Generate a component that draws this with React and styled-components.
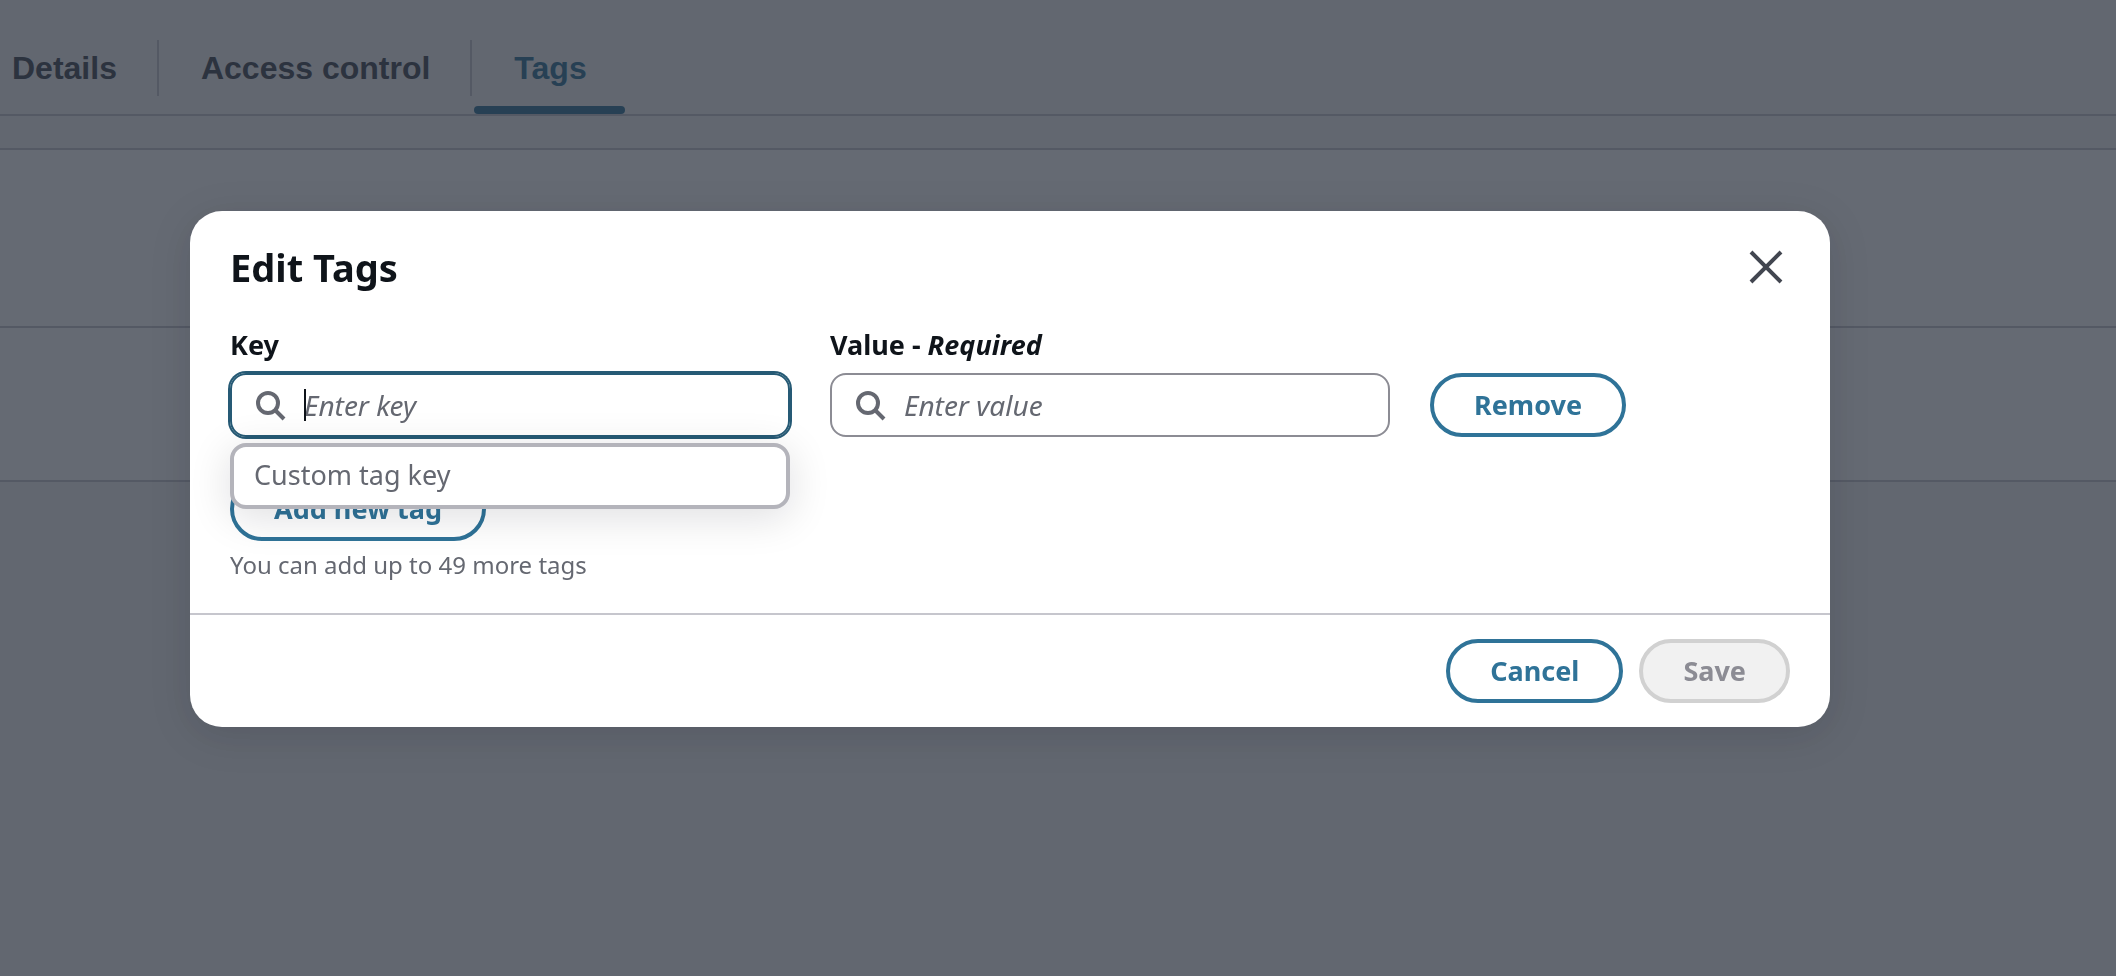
import React from "react";
import styled, { createGlobalStyle } from "styled-components";

const GlobalStyle = createGlobalStyle`
  * {
    box-sizing: border-box;
  }
  body {
    margin: 0;
    background: #f3f3f4;
    font-family: "Noto Sans", "Open Sans", sans-serif;
    font-size: 27px;
    line-height: 40px;
    color: #0f141a;
  }
`;

const tabs = [
  { label: "Details" },
  { label: "Access control" },
  { label: "Tags", active: true },
];

const SearchIcon = () => (
  <Icon viewBox="0 0 32 32" aria-hidden="true">
    <circle cx="14" cy="14" r="10" />
    <path d="M21 21L30 30" />
  </Icon>
);

const App = () => {
  return (
    <>
      <GlobalStyle />
      <Page>
        <TabList>
          {tabs.map((tab) => (
            <Tab key={tab.label}>
              <TabLink href="#" $active={tab.active}>
                {tab.label}
              </TabLink>
            </Tab>
          ))}
        </TabList>
        <Panel>
          <PanelHeader />
          <PanelBody />
        </Panel>
      </Page>
      <Overlay>
        <Modal role="dialog" aria-labelledby="modal-title">
          <Header>
            <Title id="modal-title">Edit Tags</Title>
            <CloseButton type="button" aria-label="Close">
              <CloseIcon viewBox="0 0 36 36" aria-hidden="true">
                <path d="M3 3L33 33M33 3L3 33" />
              </CloseIcon>
            </CloseButton>
          </Header>
          <Body>
            <TagRow>
              <Field>
                <Label htmlFor="tag-key">Key</Label>
                <InputBox $focused>
                  <SearchIcon />
                  <Input id="tag-key" placeholder="Enter key" />
                  <Caret />
                </InputBox>
                <Dropdown>Custom tag key</Dropdown>
              </Field>
              <Field>
                <Label htmlFor="tag-value">
                  Value - <i>Required</i>
                </Label>
                <InputBox>
                  <SearchIcon />
                  <Input id="tag-value" placeholder="Enter value" />
                </InputBox>
              </Field>
              <div>
                <Button type="button">Remove</Button>
              </div>
            </TagRow>
            <Button type="button">Add new tag</Button>
            <Hint>You can add up to 49 more tags</Hint>
          </Body>
          <Footer>
            <Button type="button">Cancel</Button>
            <Button type="button" disabled>
              Save
            </Button>
          </Footer>
        </Modal>
      </Overlay>
    </>
  );
};

const Page = styled.main`
  min-height: 100vh;
`;

const TabList = styled.ul`
  display: flex;
  align-items: flex-end;
  height: 116px;
  margin: 0;
  padding: 0;
  list-style: none;
  border-bottom: 2px solid #c6c6cd;
`;

const Tab = styled.li`
  display: flex;
  align-items: flex-start;

  &:not(:last-child)::after {
    content: "";
    width: 2px;
    height: 56px;
    margin: 0 2px;
    background: #c6c6cd;
  }

  &:first-child a {
    padding-left: 12px;
  }
`;

const TabLink = styled.a`
  padding: 8px 38px 18px 40px;
  border-bottom: 8px solid transparent;
  font-family: "Liberation Sans", Arial, sans-serif;
  font-weight: 700;
  font-size: 32px;
  line-height: 40px;
  text-decoration: none;
  color: ${(props) => (props.$active ? "#2f7398" : "#424650")};
  position: relative;

  &::after {
    content: "";
    display: ${(props) => (props.$active ? "block" : "none")};
    position: absolute;
    left: 0;
    right: 0;
    bottom: -8px;
    height: 8px;
    border-radius: 4px;
    background: #2f7398;
  }
`;

const Panel = styled.section`
  margin-top: 32px;
  background: #fff;
  border-top: 2px solid #c6c6cd;
  border-bottom: 2px solid #c6c6cd;
`;

const PanelHeader = styled.div`
  height: 178px;
  border-bottom: 2px solid #c6c6cd;
`;

const PanelBody = styled.div`
  height: 152px;
`;

const Overlay = styled.div`
  position: fixed;
  inset: 0;
  display: flex;
  align-items: flex-start;
  justify-content: center;
  padding: 211px 286px 0 190px;
  background: rgba(35, 43, 55, 0.7);
`;

const Modal = styled.section`
  flex: 1;
  background: #fff;
  border-radius: 32px;
  box-shadow: 0 8px 40px 2px rgba(0, 7, 22, 0.12);
`;

const Header = styled.header`
  display: flex;
  justify-content: space-between;
  align-items: center;
  padding: 32px 40px 0;
`;

const Title = styled.h2`
  margin: 0;
  font-weight: 700;
  font-size: 38px;
  line-height: 48px;
`;

const CloseButton = styled.button`
  display: flex;
  padding: 6px;
  border: none;
  background: none;
  cursor: pointer;
`;

const CloseIcon = styled.svg`
  width: 36px;
  height: 36px;
  fill: none;
  stroke: #424650;
  stroke-width: 4;
`;

const Body = styled.div`
  padding: 34px 40px 32px;
`;

const TagRow = styled.div`
  display: grid;
  grid-template-columns: 14fr 14fr 9fr;
  align-items: end;
  gap: 40px;
  margin-bottom: 40px;
`;

const Field = styled.div`
  position: relative;
`;

const Label = styled.label`
  display: block;
  margin-bottom: 8px;
  font-weight: 700;
`;

const InputBox = styled.div`
  display: flex;
  align-items: center;
  gap: 18px;
  height: 64px;
  padding: 0 22px;
  border: 2px solid ${(props) => (props.$focused ? "#265a75" : "#8c8c94")};
  border-radius: 16px;
  box-shadow: ${(props) => (props.$focused ? "0 0 0 2px #265a75" : "none")};
  position: relative;
`;

const Icon = styled.svg`
  flex: none;
  width: 32px;
  height: 32px;
  fill: none;
  stroke: #656871;
  stroke-width: 4;
`;

const Input = styled.input`
  flex: 1;
  min-width: 0;
  padding: 0;
  border: none;
  outline: none;
  background: none;
  font: inherit;
  font-size: 28px;

  &::placeholder {
    color: #656871;
    opacity: 1;
    font-style: italic;
  }
`;

const Caret = styled.span`
  position: absolute;
  left: 72px;
  top: 14px;
  width: 2px;
  height: 32px;
  background: #0f141a;
`;

const Dropdown = styled.div`
  position: absolute;
  top: 100%;
  left: 0;
  right: 0;
  margin-top: 6px;
  padding: 8px 20px 10px;
  border: 4px solid #b4b4bb;
  border-radius: 16px;
  background: #fff;
  color: #656871;
  box-shadow: 0 8px 40px 2px rgba(0, 7, 22, 0.12);
`;

const Button = styled.button`
  height: 64px;
  padding: 0 40px;
  border: 4px solid #2f7398;
  border-radius: 32px;
  background: #fff;
  color: #2f7398;
  font-family: inherit;
  font-weight: 700;
  font-size: 27px;
  line-height: 40px;
  cursor: pointer;

  &:disabled {
    border-color: #d1d1d1;
    background: #f1f1f1;
    color: #8c8c94;
    cursor: default;
  }
`;

const Hint = styled.p`
  margin: 8px 0 0;
  font-size: 24px;
  line-height: 32px;
  color: #656871;
`;

const Footer = styled.footer`
  display: flex;
  justify-content: flex-end;
  gap: 16px;
  padding: 24px 40px;
  border-top: 2px solid #c6c6cd;
`;

export default App;
